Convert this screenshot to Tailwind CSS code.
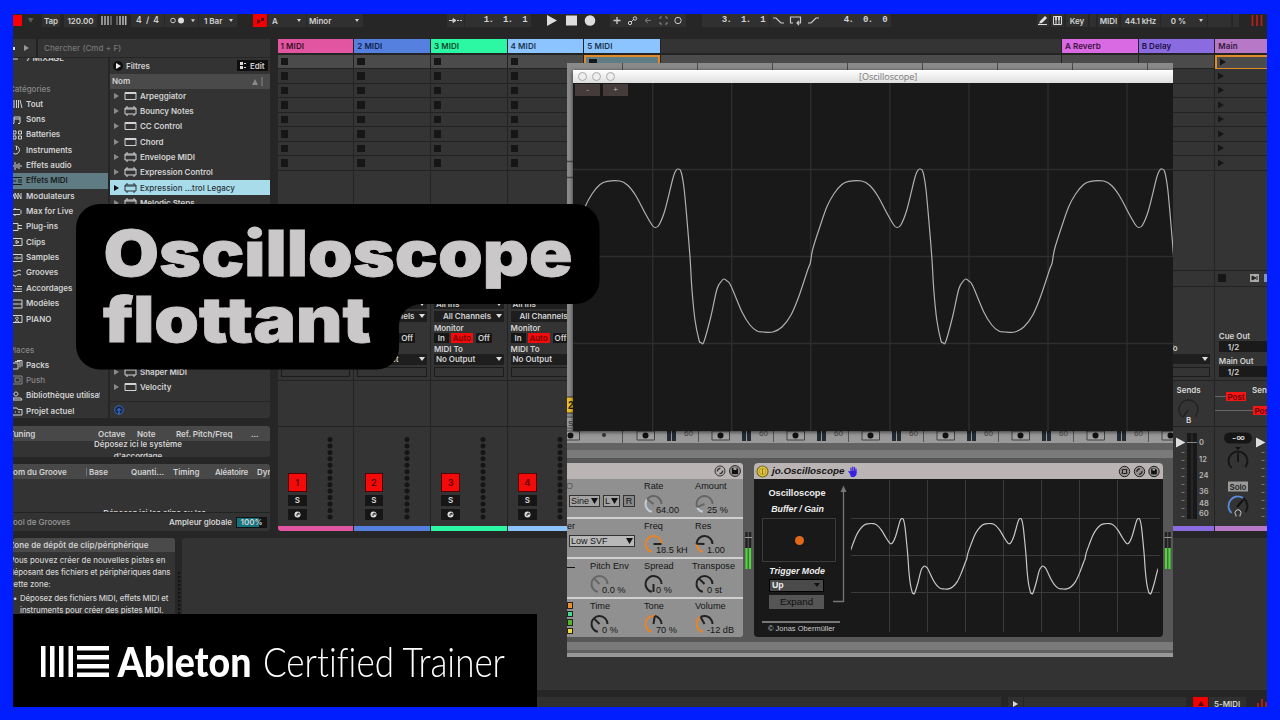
<!DOCTYPE html>
<html lang="fr">
<head>
    <meta charset="UTF-8">
    <meta name="viewport" content="width=device-width, initial-scale=1.0">
    <title>Oscilloscope flottant</title>
    <script src="https://cdn.jsdelivr.net/npm/@tailwindcss/browser@4"></script>
</head>
<body class="relative w-[1280px] h-[720px] overflow-hidden bg-[#001eff] pt-[14px] px-[13px] font-['Inter','Liberation_Sans',sans-serif] text-[8px] leading-none font-semibold text-[#d2d2d2] tracking-[-0.02px] whitespace-nowrap">

    <div class="w-[1254px] h-[693px] overflow-hidden bg-[#262626] flex flex-col">

        <!-- Transport bar -->
        <div class="h-6 flex items-start shrink-0 *:shrink-0 *:h-[13px] *:flex *:items-center">
            <div class="w-[9px]"><span class="w-[9px] h-[11px] bg-[#fa0000]"></span></div>
            <div class="w-[9px] ml-1 justify-center text-[#5c5c5c] text-[6px]">▼</div>
            <div class="w-[18px] ml-[7px] bg-[#303030] justify-center">Tap</div>
            <div class="w-[33px] ml-1 bg-[#303030] justify-center">120.00</div>
            <div class="w-[12px] ml-[4px]"><svg class="w-[11px] h-[9px]" stroke="#bbb" stroke-width="1.4"><path d="M1 0V9M4 0V9M7 0V9"/><path d="M10 0V9" stroke-width=".8"/></svg></div>
            <div class="w-[12px] ml-[3px]"><svg class="w-[11px] h-[9px]" stroke="#bbb"><path d="M1 0V9" stroke-width=".8"/><path d="M4 0V9M7 0V9M9.7 0V9" stroke-width="1.5"/></svg></div>
            <div class="w-[33px] ml-[3px] bg-[#303030] justify-center text-[8.5px]">4&nbsp; /&nbsp; 4</div>
            <div class="w-[33px] ml-px bg-[#303030]"><svg class="w-[33px] h-[13px]"><circle cx="8" cy="6.5" r="2.3" fill="none" stroke="#ccc"/><circle cx="16" cy="6.5" r="3" fill="#ddd"/><path d="M26 5.2h4l-2 3z" fill="#ccc"/></svg></div>
            <div class="w-[38px] ml-px bg-[#303030] pl-[5px]">1 Bar<svg class="w-[6px] h-[5px] ml-[6px]"><path d="M1 1h4l-2 3z" fill="#ccc"/></svg></div>
            <div class="w-[14px] ml-[16px] bg-[#f00000] justify-center"><svg class="w-[10px] h-[10px]" fill="#5c0000"><path d="M2 3l4 2.5L2 8zM6 2h3v3H6z"/></svg></div>
            <div class="w-[38px] ml-px bg-[#303030] pl-1 justify-between pr-[4px]">A<svg class="w-[6px] h-[5px]"><path d="M1 1h4l-2 3z" fill="#ccc"/></svg></div>
            <div class="w-[56px] ml-px bg-[#303030] pl-[2px] justify-between pr-[3px]">Minor<svg class="w-[6px] h-[5px]"><path d="M1 1h4l-2 3z" fill="#ccc"/></svg></div>
            <div class="w-[17px] ml-[84px] bg-[#303030]"><svg class="w-[17px] h-[13px]" stroke="#ccc" fill="#ccc"><path d="M2 6.5h5M10 6.5h2M13 6.5h2"/><path d="M6 4.5l3 2-3 2z"/></svg></div>
            <div class="w-[66px] ml-px bg-[#303030] justify-end pr-[4px] font-['Liberation_Mono',monospace] font-bold text-[9px]"><span class="tracking-[-0.6px]">&nbsp;1. &nbsp;1. &nbsp;1</span></div>
            <div class="w-[50px] ml-[15px]"><svg class="w-[50px] h-[13px]" fill="#ddd"><path d="M1 1l10 5.5L1 12zM20 1.5h11v10H20z"/><circle cx="44" cy="6.5" r="5.3"/></svg></div>
            <div class="w-[76px] ml-[14px] bg-[#303030]"><svg class="w-[76px] h-[13px]" stroke="#ccc" fill="none"><path d="M7 3v7M3.500 6.500h7" stroke-width="1.300"/><circle cx="20" cy="9" r="1.700"/><circle cx="25" cy="4.500" r="1.700"/><path d="M21 8l3-3"/><path d="M35 6.500h6M38 4l-3 2.500 3 2.500" stroke="#777"/><path d="M50 5V3h2M55 3h2v2M57 8v2h-2M52 10h-2V8" stroke="#888"/><circle cx="68" cy="6.500" r="3.200"/></svg></div>
            <div class="w-[67px] ml-[16px] bg-[#303030] justify-end pr-[4px] font-['Liberation_Mono',monospace] font-bold text-[9px]"><span class="tracking-[-0.6px]">3. &nbsp;1. &nbsp;1</span></div>
            <div class="w-[55px] ml-px bg-[#303030]"><svg class="w-[55px] h-[13px]" stroke="#ccc" fill="none" stroke-width="1.200"><path d="M3 4h3l5 5h3M23 9h-2.500V3h10v6H27M29 7l-2 2 2 2M38 9h3l5-5h3"/></svg></div>
            <div class="w-[66px] bg-[#303030] justify-end pr-[4px] font-['Liberation_Mono',monospace] font-bold text-[9px]"><span class="tracking-[-0.6px]">4. &nbsp;0. &nbsp;0</span></div>
            <div class="w-[12px] ml-[146px] bg-[#303030]"><svg class="w-[12px] h-[13px]" fill="#ddd"><path d="M3 7l5-5 2 2-5 5-3 .500zM1 10h9v1H1z"/></svg></div>
            <div class="w-[13px] ml-[2px] bg-[#303030]"><svg class="w-[13px] h-[13px]" stroke="#ddd" fill="none"><path d="M2.500 2.500h8v8h-8zM5 6.500v4M8 6.500v4"/><path d="M5 2v4.500M8 2v4.500" stroke-width="1.800"/></svg></div>
            <div class="w-[22px] ml-[2px] bg-[#303030] justify-center">Key</div>
            <div class="w-[6px] ml-[2px] bg-[#303030]"></div>
            <div class="w-[21px] ml-[2px] bg-[#303030] justify-center">MIDI</div>
            <div class="w-[39px] ml-[2px] bg-[#303030] justify-center tracking-[-0.15px]">44.1 kHz</div>
            <div class="w-[46px] ml-px bg-[#303030] justify-end pr-[3px]">0 %<svg class="w-[6px] h-[5px] ml-[12px]"><path d="M1 1h4l-2 3z" fill="#ccc"/></svg></div>
            <div class="w-[23px] ml-px bg-[#303030]"></div>
            <div class="w-[6px] ml-[2px] bg-[#303030]"></div>
            <div class="w-[15px] ml-[12px]"><svg class="w-[15px] h-[11px]" stroke="#b32020" stroke-width="1.800"><path d="M1.500 0v11M6 0v11M10.500 0v11"/></svg></div>
        </div>

        <div class="h-[493px] pt-px flex shrink-0">

            <!-- Browser -->
            <div class="w-[257px] flex flex-col shrink-0">
                <div class="h-[18px] mb-px flex items-center bg-[#333] text-[#777]">
                    <div class="w-[25px] flex items-center justify-between pr-[6px] h-full border-r-2 border-[#222]">
                        <svg class="w-[4px] h-[6px]" fill="#ddd"><path d="M0 2h2v3H0z"/></svg>
                        <svg class="w-[6px] h-[6px]" fill="#999"><path d="M0 0l5 3-5 3z"/></svg>
                    </div>
                    <span class="pl-[6px] text-[8px] tracking-[0.08px] font-medium">Chercher (Cmd + F)</span>
                </div>
                <div class="h-[360px] flex mb-2">
                    <div class="w-[95px] mr-[2px] bg-[#333] overflow-hidden">
                        <div id="sidebar" class="-mt-[7.500px]"></div>
                    </div>
                    <div class="w-[160px] bg-[#333] overflow-hidden flex flex-col rounded-br-[3px]">
                        <div class="h-[15.500px] flex items-center shrink-0 pl-[3px] pr-[2px]">
                            <svg class="w-[10px] h-[10px]"><circle cx="5" cy="5" r="5" fill="#0e0e0e"/><path d="M3 2l5 3-5 3z" fill="#eee"/></svg>
                            <span class="ml-[3px]">Filtres</span>
                            <span class="ml-auto w-[31px] h-[11px] bg-[#0e0e0e] flex items-center pl-[3px]"><svg class="w-[7px] h-[7px] mr-[3px]" fill="#ddd"><path d="M0 0h3v3H0zM0 4h3v3H0zM4 1h2v1H4zM4 5h2v1H4z"/></svg>Edit</span>
                        </div>
                        <div class="h-[15px] shrink-0 bg-[#4a4a4a] flex items-center pl-[2px]">Nom
                            <svg class="w-[12px] h-[9px] ml-auto mr-[6px]"><path d="M0 8l3-6 3 6z" fill="#888"/><path d="M10 0v9" stroke="#888"/></svg>
                        </div>
                        <div class="h-[313px] overflow-hidden shrink-0 border-b border-[#262626]"><div id="devices" class="-mt-[0.500px]"></div></div>
                        <div class="flex-1 flex items-center pl-[4px]">
                            <svg class="w-[10px] h-[10px]" fill="none"><circle cx="5" cy="5" r="4.300" fill="#16294d" stroke="#3668c0"/><path d="M5 9V4M3 5.500l2-2 2 2" stroke="#4b86e8"/></svg>
                        </div>
                    </div>
                </div>

                <div class="h-[31px] mb-[7px] bg-[#333] overflow-hidden rounded-r-[3px]">
                    <div class="h-[15px] bg-[#484848] grid grid-cols-[85px_39px_39px_75px_auto] items-center"><span class="-ml-[4px]">Tuning</span><span>Octave</span><span>Note</span><span>Ref. Pitch/Freq</span><span>...</span></div>
                    <div class="text-center leading-[11.5px] -mt-[2px] pr-[7px]">Déposez ici le système<br>d'accordage</div>
                </div>

                <div class="h-[67px] bg-[#333] overflow-hidden rounded-r-[3px] flex flex-col">
                    <div class="h-[15px] shrink-0 bg-[#484848] grid grid-cols-[73px_45px_42px_42px_42px_auto] items-center"><span class="-ml-[6px]">Nom du Groove</span><span class="border-l border-[#777] pl-[2px]">Base</span><span>Quanti...</span><span>Timing</span><span class="tracking-[-0.2px]">Aléatoire</span><span>Dynamique</span></div>
                    <div class="h-[34px] overflow-hidden pt-[30px] text-center border-b border-[#222] pr-[8px] pl-[34px]">Déposez ici les clips ou les</div>
                    <div class="flex-1 flex items-center pr-[3px]"><span class="text-[#999] font-medium -ml-[5px]">Pool de Grooves</span><span class="ml-auto">Ampleur globale</span><span class="ml-[4px] w-[31px] h-[11px] border border-[#111] bg-linear-to-r from-[#137480] from-75% to-[#151515] to-75% flex items-center justify-center">100%</span></div>
                </div>
            </div>

            <!-- Session view -->
            <div id="session" class="ml-[7.5px] flex gap-[1px] bg-[#232323] w-[990px] overflow-hidden rounded-bl-[3px]"></div>
        </div>

        <!-- Info view and device area -->
        <div class="h-[152px] mt-[7px] flex shrink-0">
            <div class="w-[162px] bg-[#333] rounded-t-[3px] overflow-hidden">
                <div class="h-[14px] bg-[#4a4a4a] flex items-center tracking-[0.1px]"><span class="-ml-[4px]">Zone de dépôt de clip/périphérique</span></div>
                <div class="-ml-[4px] pt-[2px] leading-[12.200px] text-[7.800px] tracking-[0.04px] font-medium">Vous pouvez créer de nouvelles pistes en<br><span class="tracking-[-0.06px]">déposant des fichiers et périphériques dans</span><br>cette zone:</div>
                <div class="flex pt-[1px] leading-[12.200px] text-[7.800px] tracking-[-0.08px] font-medium"><span class="w-[7px]">•</span><span>Déposez des fichiers MIDI, effets MIDI et<br>instruments pour créer des pistes MIDI.</span></div>
            </div>
            <svg class="w-[7px] h-[152px]"><path d="M4 34v45" stroke="#111" stroke-width="2" stroke-dasharray="2 2"/></svg>
            <div class="flex-1 bg-[#333] rounded-tl-[3px]"></div>
        </div>

        <!-- Status bar -->
        <div class="mt-[7px] h-[10px] flex shrink-0 *:shrink-0">
            <div class="w-[988px] bg-[#303030]"></div>
            <div class="w-[15px] ml-[7px] bg-[#303030] pl-[5px] pt-[4px]"><svg class="w-[5px] h-[6px]" fill="#ddd"><path d="M0 0l5 3-5 3z"/></svg></div>
            <div class="w-[162px] ml-px bg-[#303030]"></div>
            <div class="w-[15px] ml-[7px] bg-[#f50000] flex justify-center pt-[4px]"><svg class="w-[6px] h-[5px]" fill="#500"><path d="M3 0l3 5H0z"/></svg></div>
            <div class="w-[37px] ml-px bg-[#303030] pl-[5px] pt-[3px]">5-MIDI</div>
            <svg class="w-[13px] h-[10px] ml-[11px]" stroke="#d32020" stroke-width="1.500"><path d="M1 6v4M5 2v8M9 5v5M12 8v2"/></svg>
        </div>
    </div>

    <!-- Second Live window -->
    <div class="absolute left-[567px] top-[63px] w-[605.500px] h-[594px] overflow-hidden bg-[#5b5b5b] flex flex-col font-['Liberation_Sans',Arial,sans-serif] font-normal tracking-normal text-[#151515]">
        <svg class="w-full h-[367px] shrink-0 bg-[#8a8a8a]">
            <path d="M55.500 0v8M130.500 0v8M205.500 0v8M280.500 0v8M355.500 0v8M430.500 0v8M505.500 0v8M580.500 0v8" stroke="#4a4a4a"/>
            <path d="M0 98.500h8M0 114.500h8" stroke="#4c4c4c" stroke-width="1.500"/>
            <rect x="-2" y="334" width="10" height="16" fill="#f0c020" stroke="#333"/>
            <text x="1" y="346" font-size="10" font-weight="700" fill="#222">2</text>
            <rect x="-2" y="354" width="10" height="11" fill="#999" stroke="#555"/>
            <text x="1" y="363" font-size="8" fill="#222">S</text>
        </svg>
        <svg id="strips" class="w-full h-[13px] shrink-0 bg-[#999]"></svg>
        <div class="h-[7px] shrink-0 bg-[#636363]"></div>
        <div class="h-[8px] shrink-0 bg-[#7a7a7a]"></div>

        <div class="h-[184px] shrink-0 pt-[5px] flex items-start bg-[#575757]">
            <!-- Instrument -->
            <div class="w-[176px] h-[174px] bg-[#d0d0d0] rounded-r-[4px] overflow-hidden flex flex-col">
                <div class="h-[16px] shrink-0 bg-[#bab4b4] flex items-center justify-end gap-[3px] pr-[2px]">
                    <svg class="w-[12px] h-[12px]" fill="none" stroke="#333"><circle cx="6" cy="6" r="5"/><path d="M3.500 6.500a2.500 2.500 0 0 1 3-3M8.500 5.500a2.500 2.500 0 0 1-3 3" stroke-width="1.500"/></svg>
                    <svg class="w-[12px] h-[12px]"><circle cx="6" cy="6" r="5.500" fill="#8a8686" stroke="#333"/><path d="M3 3h5l1 1v5H3z" fill="#111"/><path d="M4.500 3h3v2h-3z" fill="#aaa"/></svg>
                </div>
                <div id="knobs" class="flex-1 flex flex-col gap-[2px]"></div>
            </div>
            <svg class="w-[10px] h-[174px]"><path d="M3.500 69v37M7 69v37" stroke="#222" stroke-width="2.500"/><path d="M2 74.500h7" stroke="#999"/><path d="M3.500 85v21M7 85v21" stroke="#52d440" stroke-width="2.500"/></svg>

            <!-- jo.Oscilloscope -->
            <div class="w-[409px] h-[174px] ml-[1px] bg-[#191919] rounded-[4px] overflow-hidden flex flex-col">
                <div class="h-[16px] shrink-0 bg-[#bab4b4] flex items-center pl-[2px] pr-[1px]">
                    <svg class="w-[13px] h-[13px]"><circle cx="6.500" cy="6.500" r="5.500" fill="#dfc640" stroke="#7a6a20" stroke-width="1.200"/><circle cx="6.500" cy="6.500" r="3.200" fill="none" stroke="#b79a28"/><path d="M6.500 4v5" stroke="#8a741c"/></svg>
                    <span class="ml-[3px] text-[9.800px] font-bold italic">jo.Oscilloscope</span>
                    <svg class="w-[10px] h-[11px] ml-[4px]" fill="#3a20e0" stroke="#3a20e0" stroke-linecap="round"><path d="M2.500 5.500h5.500v3l-1.500 2h-3z"/><path d="M3 6V2M4.800 6V1M6.500 6V1.500M8 6.500V3M2.800 8L.8 5.500" stroke-width="1.200"/></svg>
                    <svg class="w-[44px] h-[13px] ml-auto" fill="none" stroke="#222"><circle cx="6.500" cy="6.500" r="5.200" fill="#969090"/><path d="M4.500 4.500h4v4h-4zM3.500 5h1M8.500 5h1M3.500 8h1M8.500 8h1" /><circle cx="21.500" cy="6.500" r="5.200" fill="#969090"/><path d="M19 7a2.500 2.500 0 0 1 3-3M24 6a2.500 2.500 0 0 1-3 3" stroke-width="1.300"/><circle cx="36" cy="6.500" r="5.200" fill="#969090"/><path d="M33.500 4h4l1 1v4h-5z" fill="#111"/><path d="M34.500 4h2.500v1.500h-2.500z" fill="#aaa" stroke="none"/></svg>
                </div>
                <div class="flex-1 flex">
                    <div class="w-[79px] pl-[8px] pt-[10px] text-[#eee] flex flex-col">
                        <b class="text-[9.200px] text-center pr-[3px] -mr-[2px]">Oscilloscope</b>
                        <b class="text-[8.800px] italic text-center mt-[7px]">Buffer / Gain</b>
                        <div class="w-[74px] h-[44px] mt-[4px] border border-[#3c3c3c] flex items-center justify-center"><span class="w-[9px] h-[9px] rounded-full bg-[#e06a18]"></span></div>
                        <b class="text-[8.800px] italic text-center mt-[5px] pr-[1px]">Trigger Mode</b>
                        <div class="w-[55px] h-[13px] mt-[3px] ml-[7px] border border-black bg-[#4a4a4a] flex items-center justify-between px-[2px] text-[8.800px] font-bold">Up<svg class="w-[8px] h-[6px]"><path d="M1 1h6l-3 4z" fill="#111"/></svg></div>
                        <div class="w-[55px] h-[14px] mt-[3px] ml-[7px] bg-[#555] flex items-center justify-center text-[9.800px] text-[#101010]">Expand</div>
                        <div class="w-[78px] mt-[12px] border-t-2 border-[#777]"></div>
                        <div class="text-[7.500px] text-[#ccc] mt-[2px] ml-[6px]">© Jonas Obermüller</div>
                    </div>
                    <svg class="w-[330px] h-[158px]">
                        <path d="M-7 122.500H10.500V10" fill="none" stroke="#777" stroke-width="1.300"/><path d="M7.500 13l3-6.500 3 6.500z" fill="#777"/>
                        <path d="M56.500 1v152M94.500 1v152M132.500 1v152M170.500 1v152M208.500 1v152M246.500 1v152M284.500 1v152M18 39.500h309M18 76.500h309M18 113.500h309" stroke="#3a3a3a"/>
                        <svg x="18" width="307" height="158"><path id="smallWave" fill="none" stroke="#c8c8c8" stroke-width="1.200"/></svg>
                    </svg>
                </div>
            </div>
            <svg class="w-[9px] h-[174px]"><path d="M3 69v37M6.500 69v37" stroke="#222" stroke-width="2.500"/><path d="M1.500 74.500h7" stroke="#999"/><path d="M3 85v21M6.500 85v21" stroke="#52d440" stroke-width="2.500"/></svg>
        </div>
        <div class="h-[8px] shrink-0 bg-[#7a7a7a]"></div>
        <div class="h-[3px] shrink-0 bg-[#606060]"></div>
        <div class="h-[4px] shrink-0 bg-[#989898]"></div>

        <!-- Floating scope -->
        <div class="absolute left-[6px] top-[7px] w-[600px] h-[360.500px] bg-[#191919] flex flex-col shadow-[0_1px_4px_#000a]">
            <div class="h-[12.500px] bg-linear-to-b from-white to-[#dedede] relative flex items-center gap-[4.500px] pl-[4.500px]">
                <span class="size-[9.500px] rounded-full border border-[#aaa] bg-[#eee]"></span>
                <span class="size-[9.500px] rounded-full border border-[#aaa] bg-[#eee]"></span>
                <span class="size-[9.500px] rounded-full border border-[#aaa] bg-[#eee]"></span>
                <span class="ml-[239.500px] text-[9px] text-[#777] font-['Open_Sans','Liberation_Sans',sans-serif]">[Oscilloscope]</span>
            </div>
            <div class="relative h-[348px]">
                <svg class="w-[600px] h-[348px]" viewBox="573 83 600 348">
                    <path d="M652.700 83v348M731.700 83v348M810.700 83v348M889.900 83v348M969 83v348M1048 83v348M1127 83v348M573 169.500h600M573 256.500h600M573 343.500h600" stroke="#2e2e2e" stroke-width="1.300"/>
                    <path id="bigWave" fill="none" stroke="#b0b0b0" stroke-width="1.200"/>
                </svg>
                <div class="absolute left-[2px] top-[1px] flex gap-[3px] text-[8px] text-[#bbb]">
                    <span class="w-[25px] h-[12px] bg-[#453b3b] flex items-center justify-center">-</span>
                    <span class="w-[25px] h-[12px] bg-[#453b3b] flex items-center justify-center">+</span>
                </div>
            </div>
        </div>
    </div>

    <!-- Title -->
    <svg class="absolute left-[76px] top-[204px] w-[524px] h-[166px] tracking-normal">
        <path d="M24 0H499.500a24 24 0 0 1 24 24V76a24 24 0 0 1-24 24H345a22 22 0 0 0-22 22V143.500a22 22 0 0 1-22 22H24a24 24 0 0 1-24-24V24A24 24 0 0 1 24 0z"/>
        <g font-family="Inter, sans-serif" font-weight="900" font-size="63" fill="#cbc8ca" stroke="#cbc8ca" stroke-width=".8">
            <text x="27.500" y="72" textLength="469" lengthAdjust="spacingAndGlyphs">Oscilloscope</text>
            <text x="27" y="138" textLength="268" lengthAdjust="spacingAndGlyphs">flottant</text>
        </g>
    </svg>

    <!-- Ableton badge -->
    <div class="absolute left-[13px] top-[614px] w-[524px] h-[93px] bg-black">
        <svg class="w-[524px] h-[93px] tracking-normal will-change-transform [font-variant-ligatures:none]" fill="#fff">
            <path d="M28 32h4.500v31H28zM37 32h4.500v31H37zM46 32h4.500v31H46zM55.500 32H60v31h-4.500zM64 32h32v4.500H64zM64 41h32v4.500H64zM64 50h32v4.500H64zM64 58.500h32V63H64z"/>
            <text x="104.500" y="63" font-family="Lato, sans-serif" font-weight="900" font-size="41" textLength="134" lengthAdjust="spacingAndGlyphs">Ableton</text>
            <text x="250" y="63" font-family="Lato, sans-serif" font-weight="300" font-size="41" textLength="242" lengthAdjust="spacingAndGlyphs">Certified Trainer</text>
        </svg>
    </div>

    <script>
        // Sidebar: [label, icon path, state]
        const sidebar = [
            ['7 MIXAGE', 'M0 3h5M0 6h5'],
            ['', ''],
            ['Catégories', '', 'title'],
            ['Tout', 'M1 1v8M3.500 1v8M5.500 1v8M7 1l2 8'],
            ['Sons', 'M1 8V2h6v6M1 4h6M0 8.500h1M5 8.500h2'],
            ['Batteries', 'M0 1h3v3H0zM5.500 1h3v3h-3zM0 6h3v3H0zM5.500 6h3v3h-3z'],
            ['Instruments', 'M2.500 1a4 4 0 1 1-2 7.500M3.500 5V1'],
            ['Effets audio', 'M0 4v2M2 1v8M4 3v4M6 2v6M8 4v2'],
            ['Effets MIDI', 'M0 1.500h9M5 4h4M5 6h4M0 8.500h9M0 5h3', 'active'],
            ['Modulateurs', 'M0 3l2 5V2l3 6V2l3 6V2'],
            ['Max for Live', 'M0 2.500h7l1 1v3l-1 1H0M2 1v2M2 7v2'],
            ['Plug-ins', 'M0 1.500h5v7H0M5 3.500h4M5 6.500h4'],
            ['Clips', 'M0 1.500h9v7H0M3 3.500l3 1.500-3 1.500z'],
            ['Samples', 'M0 1.500h9v7H0M2 4v2M4 3.500v3M6 4v2M7 5h1'],
            ['Grooves', 'M0 3q2 2 4 0t4 0M0 7q2 2 4 0t4 0'],
            ['Accordages', 'M0 8.500h9M2 6h7M4 3.500h5M0 2l3 2'],
            ['Modèles', 'M0 1h9v8H0M0 5h9'],
            ['PIANO', 'M0 1.500h9v7H0M2 8q2-3 4 0M4 3a1.300 1.300 0 1 1-.1 0'],
            ['', ''],
            ['Places', '', 'title'],
            ['Packs', 'M0 3h5v6H0M2 1.500h5v6M4 .5h5v6'],
            ['Push', 'M0 1h9v8H0M2 3h5v4H2z', 'dim'],
            ['Bibliothèque utilisateur', 'M3 1a2 2 0 1 1-.1 0M0 9V7h8l1 2H0'],
            ['Projet actuel', 'M0 2h4l1 1.500h4V9H0M2 6h1M5 6h2']
        ];
        const states = { title: 'text-[#888] font-medium', active: 'bg-[#5f7c85] text-[#1c1c1c]', dim: 'text-[#888] font-medium' };
        document.getElementById('sidebar').innerHTML = sidebar.map(([label, icon, state]) => `
            <div class="h-[15.350px] flex items-center overflow-hidden ${states[state] || ''}">
                ${state === 'title'
                    ? `<span class="-ml-[4px]">${label}</span>`
                    : `<svg class="w-[10px] h-[10px] mr-[3px] shrink-0" fill="none" stroke="currentColor"><path d="${icon}"/></svg><span class="w-[74px] overflow-hidden shrink-0 leading-[11px]">${label}</span>`}
            </div>`).join('');

        const rack = 'M1 2.500h11v7H1zM1 3.500h11';
        const max = 'M1 3h11v6H1zM1 4h11M3 1v2M10 1v2M3 9v2M10 9v2';
        const devices = [['Arpeggiator', rack], ['Bouncy Notes', max], ['CC Control', rack], ['Chord', rack], ['Envelope MIDI', max],
            ['Expression Control', max], ['Expression ...trol Legacy', max, true], ['Melodic Steps', max], null, ['Shaper MIDI', max], ['Velocity', rack]];
        document.getElementById('devices').innerHTML = devices.map(d => d ? `
            <div class="h-[15.350px] flex items-center pl-[4px] ${d[2] ? 'bg-[#a9dceb] text-[#2a3338] font-medium tracking-[0.04px]' : ''}">
                <svg class="w-[6px] h-[6px] mr-[4px]" fill="${d[2] ? '#111' : '#8a8a8a'}"><path d="M0 0l5 3-5 3z"/></svg>
                <svg class="w-[13px] h-[12px] mr-[3px]" fill="none" stroke="currentColor"><path d="${d[1]}"/></svg>${d[0]}
            </div>` : '<div class="h-[153.500px]"></div>').join('');

        // Session columns
        const slot = (mark, first) => `<div class="h-[14.500px] border-b border-[#222] flex items-center ${first ? 'bg-[#4b4b4b]' : 'bg-[#343434]'}">${mark}</div>`;
        const stop = '<span class="w-[7.500px] h-[7.500px] ml-[3px] bg-[#161616]"></span>';
        const launch = '<svg class="w-[7px] h-[8px] ml-[3px]"><path d="M0 .5l6 3.500L0 7.500z" fill="#161616"/></svg>';
        const arrow = '<svg class="w-[6px] h-[6px] ml-auto"><path d="M0 1h6l-3 4z" fill="#ddd"/></svg>';
        const column = (t) => `
            <div class="${t.width} shrink-0 flex flex-col">
                <div class="h-[14px] mb-[1.500px] flex items-center pl-[3px] text-[8px] tracking-[0.1px] ${t.color} ${t.ink}">${t.name}</div>
                ${[0, 1, 2, 3, 4, 5, 6, 7].map(i => slot(t.mark, i === 0)).join('')}
                <div class="h-[100px] bg-[#343434] border-b border-[#222]"></div>
                <div class="h-[16px] bg-[#343434] border-b border-[#222] flex items-center">${t.stopRow || t.mark}</div>
                <div class="h-[94px] bg-[#343434] border-b border-[#222] overflow-hidden">${t.io || ''}</div>
                <div class="h-[46.500px] bg-[#343434] border-b border-[#222] overflow-hidden">${t.sends || ''}</div>
                <div class="h-[99px] bg-[#343434] overflow-hidden">${t.mixer || ''}</div>
                <div class="h-[5px] ${t.color}"></div>
            </div>`;
        const io = `
            <div class="px-[3px] pt-[12px]">
                <div class="h-[10px] bg-[#1e1e1e] flex items-center px-[2px]">All Ins${arrow}</div>
                <div class="h-[11px] mt-[2px] bg-[#1e1e1e] flex items-center pl-[9px] pr-[2px]">All Channels${arrow}</div>
                <div class="mt-[2px] h-[8px]">Monitor</div>
                <div class="flex gap-[2px] mt-[1px] h-[10px] *:flex *:items-center *:justify-center">
                    <span class="w-[15px] bg-[#161616]">In</span><span class="w-[22px] bg-[#f50a0a] text-[#700]">Auto</span><span class="w-[16px] ml-px bg-[#161616]">Off</span>
                </div>
                <div class="mt-[2px] h-[8px]">MIDI To</div>
                <div class="h-[11px] mt-[1px] bg-[#1e1e1e] flex items-center px-[2px]">No Output${arrow}</div>
                <div class="h-[10px] mt-[2.500px] border border-[#1c1c1c]"></div>
            </div>`;
        const mixer = n => `
            <div class="flex pl-[10.500px]">
                <div class="pt-[46px] flex flex-col gap-[3px] w-[18.500px]">
                    <span class="h-[18.500px] bg-[#f50a0a] border border-[#500] text-[#600] text-[9px] font-bold flex items-center justify-center">${n}</span>
                    <span class="h-[11px] bg-[#161616] flex items-center justify-center">S</span>
                    <span class="h-[11px] bg-[#161616] flex items-center justify-center"><svg class="w-[7px] h-[7px]"><circle cx="3.500" cy="3.500" r="3" fill="#ddd"/><path d="M3 5V3l2-1v2" stroke="#222" fill="none"/></svg></span>
                </div>
                <svg class="w-[6px] h-[90px] ml-[20.500px] mt-[9px]"><path d="M3 3.500V86" stroke="#151515" stroke-width="5" stroke-linecap="round" stroke-dasharray="0 6.450"/></svg>
            </div>`;
        const fader = x => `
            <path d="M${x + 11} 6h4.500v86h-4.500zM${x + 16.500} 6h4.500v86h-4.500z" fill="#181818"/><path d="M${x + 11} 15.500h10" stroke="#888"/>
            <path d="M${x + 7} 25v67" stroke="#777" stroke-width="3" stroke-dasharray="1 7"/><path d="M${x} 10.500l9.500 5-9.500 5z" fill="#ddd"/>`;
        const tracks = [
            { name: '1 MIDI', width: 'w-[75.700px]', color: 'bg-[#e255a0]', ink: 'text-[#3a1028]', mark: stop, mixer: mixer(1),
              io: '<div class="h-[10px] mt-[80.500px] mx-[3px] border border-[#1c1c1c]"></div>' },
            { name: '2 MIDI', width: 'w-[75.700px]', color: 'bg-[#5580e0]', ink: 'text-[#10204a]', mark: stop, io, mixer: mixer(2) },
            { name: '3 MIDI', width: 'w-[75.700px]', color: 'bg-[#2cf8a4]', ink: 'text-[#0a4a30]', mark: stop, io, mixer: mixer(3) },
            { name: '4 MIDI', width: 'w-[75.700px]', color: 'bg-[#8cc4ff]', ink: 'text-[#1c3450]', mark: stop, io, mixer: mixer(4) },
            { name: '5 MIDI', width: 'w-[75.700px]', color: 'bg-[#8cc4ff]', ink: 'text-[#1c3450]', mark: stop },
            { name: '', width: 'w-[400px]', color: 'bg-[#343434]', ink: '', mark: ' ' },
            { name: 'A Reverb', width: 'w-[75.700px]', color: 'bg-[#d96ae4]', ink: 'text-[#3c1040]', mark: ' ' },
            { name: 'B Delay', width: 'w-[75.700px]', color: 'bg-[#8a6be0]', ink: 'text-[#20104a]', mark: ' ',
              io: `<div class="px-[4px] pt-[57.500px]"><div class="h-[8px] pl-[1px]">Audio To</div><div class="h-[10px] mt-[1.500px] bg-[#1e1e1e] flex items-center px-[2px]">${arrow}</div><div class="h-[10px] mt-[3px] border border-[#1c1c1c]"></div></div>`,
              sends: '<svg class="w-[76px] h-[46px]"><text x="37.500" y="12" fill="#d8d8d8">Sends</text><circle cx="49.500" cy="28.500" r="9.500" fill="none" stroke="#222" stroke-width="1.500" stroke-dasharray="46 14" transform="rotate(128 49.500 28.500)"/><path d="M49 29l-5 7" stroke="#222" stroke-width="1.500"/><text x="47" y="41.500" fill="#d8d8d8">B</text></svg>',
              mixer: `<svg class="w-[76px] h-[99px]" fill="#b5b5b5" font-size="7.500">${fader(37)}<text x="60" y="17.500">0</text><text x="60" y="34.500">12</text><text x="60" y="50.500">24</text><text x="60" y="66.500">36</text><text x="60" y="79">48</text><text x="60" y="89">60</text></svg>` },
            { name: 'Main', width: 'w-[52px]', color: 'bg-[#b878c8]', ink: 'text-[#32183c]', mark: launch,
              stopRow: stop + '<svg class="w-[19px] h-[10px] ml-auto" fill="#aaa"><path d="M2 1h9v8H2z"/><path d="M4 3l4 2-4 2zM9 3v4" fill="#222" stroke="#222"/><path d="M16 1h3v8h-3z" fill="#8795b5"/></svg>',
              io: '<div class="pl-[3.500px] pt-[45.500px]"><div class="h-[8px]">Cue Out</div><div class="h-[11px] mt-[1px] bg-[#1a1a1a] flex items-center pl-[9px]">1/2</div><div class="h-[8px] mt-[5px]">Main Out</div><div class="h-[11px] mt-[1px] bg-[#1a1a1a] flex items-center pl-[9px]">1/2</div></div>',
              sends: '<svg class="w-[52px] h-[46px]"><path d="M0 15.500h12M0 29.500h40" stroke="#666"/><text x="37" y="12" fill="#d8d8d8">Sends</text><path d="M11 11h20v9H11zM38 25h20v9H38z" fill="#f51515"/><text x="12.500" y="18.500" fill="#600">Post</text><text x="39.500" y="32.500" fill="#600">Post</text></svg>',
              mixer: `<svg class="w-[52px] h-[99px]" fill="none">${fader(41)}<rect x="9" y="5.500" width="28" height="11" rx="5.500" fill="#151515"/><text x="17" y="14" font-size="9" fill="#ccc">-∞</text>
                <path d="M20 20h6l-3 3z" fill="#111"/><circle cx="23" cy="34" r="9.500" stroke="#161616" stroke-width="2" stroke-dasharray="44 16" transform="rotate(132 23 34)"/><path d="M23 35v-9" stroke="#161616" stroke-width="2"/>
                <path d="M13 54.500h20v10H13z" fill="#9a9a9a"/><text x="14.500" y="62.500" fill="#222">Solo</text>
                <circle cx="23" cy="79" r="9.500" stroke="#161616" stroke-width="2" stroke-dasharray="44 16" transform="rotate(132 23 79)"/><circle cx="23" cy="79" r="9.500" stroke="#5a8ad8" stroke-width="2" stroke-dasharray="28 32" transform="rotate(132 23 79)"/><path d="M22 80l6-7" stroke="#111" stroke-width="2"/><path d="M21 89.500v-1.500a3 3 0 1 1 4 0v1.500" stroke="#ccc"/></svg>` }
        ];
        const session = document.getElementById('session');
        session.innerHTML = tracks.map(column).join('');
        // Selected slot on track 5 and selected scene on Main
        session.children[4].children[1].classList.replace('bg-[#4b4b4b]', 'bg-[#5f7c85]');
        session.children[4].children[1].classList.add('border-2', 'border-[#e08a28]');
        session.children[8].children[1].classList.add('border-2', 'border-[#e08a28]', 'border-r-0');

        // Mixer bottoms of the second window
        document.getElementById('strips').innerHTML = [-1, 0, 1, 2, 3, 4, 5, 6, 7].map(i => {
            const x = 70 + i * 75;
            return `<path d="M${x} 1h17.500v9H${x}z" fill="#a0a0a0" stroke="#444"/><circle cx="${x + 8.500}" cy="5.500" r="3" fill="#111"/>` +
                (i < 0 ? '<circle cx="37" cy="5" r="2" fill="#333"/><path d="M55.500 0v13" stroke="#555"/>' :
                `<path d="M${x + 30} 0h4v11h-4zM${x + 35} 0h4v11h-4z" fill="#222a33"/><text x="${x + 47}" y="6" font-size="8" fill="#444">60</text><path d="M${x + 61.500} 0v12" stroke="#555"/>`);
        }).join('');

        // Knobs: value 0..1 over a 270 degree arc starting at the bottom
        const knob = ([label, value, text, arc, ink, center]) => `
            <div class="h-full pt-[3px] relative">
                <div class="text-[9.200px] leading-[9px] ${center ? '-ml-[3px]' : ''}">${label}</div>
                <svg class="w-[22px] h-[20px] mt-[3px] overflow-visible" fill="none" stroke-width="2">
                    <circle cx="9.500" cy="10" r="8" stroke="${arc || ink}" pathLength="360" stroke-dasharray="${Math.max(0, 270 * value - 12)} 360" transform="rotate(102 9.500 10)"/>
                    <circle cx="9.500" cy="10" r="8" stroke="${ink}" pathLength="360" stroke-dasharray="${Math.min(258, 270 * (1 - value))} 360" transform="rotate(${Math.max(102, 90 + 270 * value)} 9.500 10)"/>
                    <path d="M9.500 10h8" stroke="${ink}" transform="rotate(${90 + 270 * value} 9.500 10)"/>
                </svg>
                <span class="absolute left-[12px] top-[26.500px] text-[9.200px] leading-[9px]">${text}</span>
            </div>`;
        const dark = '#222', gray = '#666', orange = '#e8832a', pale = '#c4ccd4';
        const box = 'h-[12px] border border-[#333] flex items-center text-[9px] justify-between px-[1px]';
        const tri = '<svg class="w-[7px] h-[6px]"><path d="M0 0h7L3.500 6z" fill="#111"/></svg>';
        const rows = [
            { left: `<div class="text-[9px] pt-[3px] -ml-[1px] text-[#555]">O</div><div class="flex gap-[3px] mt-[4px] ml-[2px]"><span class="w-[31px] bg-[#a4a4a4] ${box}">Sine${tri}</span><span class="w-[17px] bg-[#a4a4a4] ${box}">L${tri}</span><span class="w-[12px] bg-[#888] ${box} justify-center text-[8px]">R</span></div>`,
              wide: true, knobs: [['Rate', .47, '64.00', pale, gray], ['Amount', .25, '25 %', pale, gray]] },
            { left: `<div class="text-[9px] pt-[3px]">er</div><div class="w-[66px] mt-[4px] ml-[2px] bg-[#b8b8b8] ${box}">Low SVF${tri}</div>`,
              wide: true, knobs: [['Freq', 1, '18.5 kH', orange, dark], ['Res', .34, '1.00', orange, dark]] },
            { left: '<div class="w-[8px] mt-[8px] border-t border-[#111]"></div>',
              knobs: [['Pitch Env', .5, '0.0 %', '', gray], ['Spread', 0, '0 %', '', dark], ['Transpose', .5, '0 st', '', dark, true]] },
            { left: '<div class="flex flex-col gap-[2px] pt-[3px] *:w-[6px] *:h-[6.500px] *:border *:border-[#222]"><span class="bg-[#e89030]"></span><span class="bg-[#48d890]"></span><span class="bg-[#50b828]"></span><span class="bg-[#f0d840]"></span></div>',
              knobs: [['Time', .5, '0 %', '', dark], ['Tone', .7, '70 %', orange, dark], ['Volume', .56, '-12 dB', orange, dark]] }
        ];
        document.getElementById('knobs').innerHTML = rows.map(r => `
            <div class="flex-1 bg-[#909090] grid ${r.wide ? 'grid-cols-[77px_51px_48px]' : 'grid-cols-[23px_54px_51px_48px]'}"><div>${r.left}</div>${r.knobs.map(knob).join('')}</div>`).join('');

        // One period of the signal, x relative to the peak
        const shape = [[-109.500, 263], [-107, 249], [-100, 227], [-93, 207], [-86, 194], [-78, 184.500], [-71, 181.300], [-58, 181], [-50, 185.500], [-42, 196], [-33, 213], [-26, 225],
            [-23, 227.500], [-19, 225], [-13, 210], [-5, 178], [-2, 170.500], [0, 169], [3, 171.500], [6, 188], [9, 220], [12, 257], [14, 290], [17, 320], [21, 340], [23, 342.500],
            [26, 341.500], [33, 316], [39, 289], [44, 280.500], [46, 279], [49, 281], [53, 286], [64, 312], [72, 325], [79, 331], [85, 332], [95, 332], [104, 327], [113, 315], [121, 296], [130, 269]];
        const wave = (peak, sx, top, sy) => {
            const p = [-1, 0, 1, 2].flatMap(n => shape.map(([x, y]) => [peak + (x + n * 241.8) * sx, top + (y - 169) * sy]));
            let d = `M${p[0]}L${p[1]}`;
            for (let i = 1; i < p.length - 2; i++) {
                const [a, b, c, e] = [p[i - 1], p[i], p[i + 1], p[i + 2]];
                d += `C${b[0] + (c[0] - a[0]) / 6} ${b[1] + (c[1] - a[1]) / 6} ${c[0] - (e[0] - b[0]) / 6} ${c[1] - (e[1] - b[1]) / 6} ${c[0]} ${c[1]}`;
            }
            return d;
        };
        document.getElementById('bigWave').setAttribute('d', wave(678, 1, 169, 1));
        document.getElementById('smallWave').setAttribute('d', wave(51, .489, 39.5, .432));
    </script>
</body>
</html>
